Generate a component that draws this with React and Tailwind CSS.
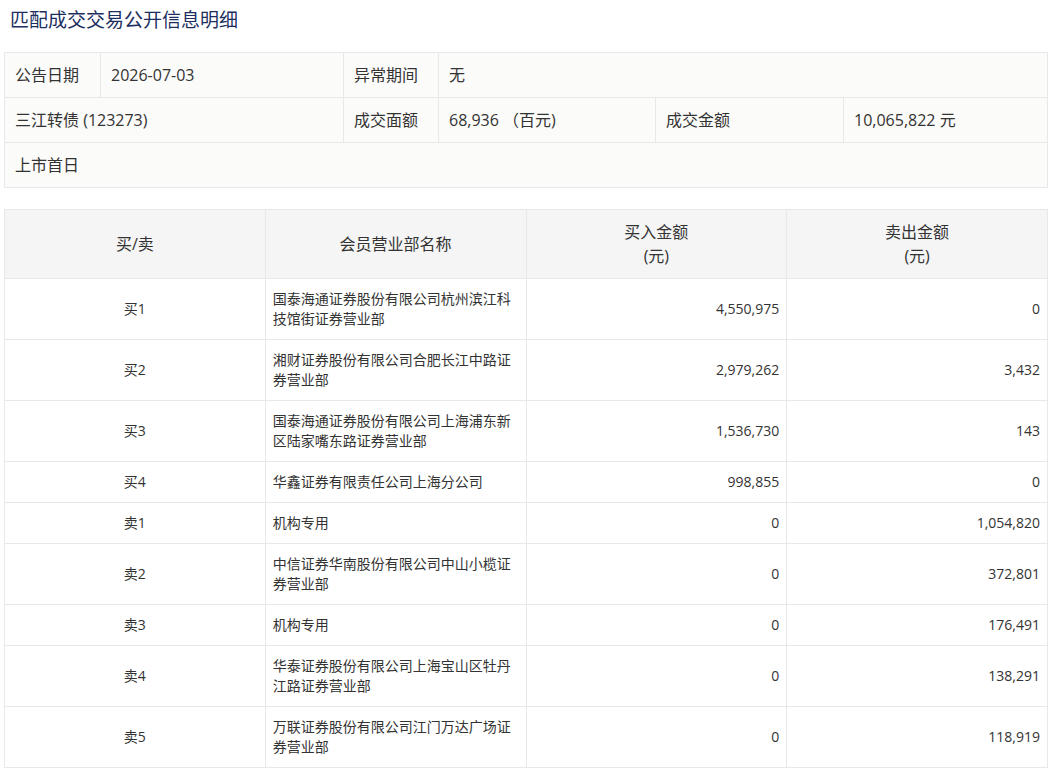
import React from "react";

const rows = [
  { side: "买1", name: "国泰海通证券股份有限公司杭州滨江科技馆街证券营业部", buy: "4,550,975", sell: "0" },
  { side: "买2", name: "湘财证券股份有限公司合肥长江中路证券营业部", buy: "2,979,262", sell: "3,432" },
  { side: "买3", name: "国泰海通证券股份有限公司上海浦东新区陆家嘴东路证券营业部", buy: "1,536,730", sell: "143" },
  { side: "买4", name: "华鑫证券有限责任公司上海分公司", buy: "998,855", sell: "0" },
  { side: "卖1", name: "机构专用", buy: "0", sell: "1,054,820" },
  { side: "卖2", name: "中信证券华南股份有限公司中山小榄证券营业部", buy: "0", sell: "372,801" },
  { side: "卖3", name: "机构专用", buy: "0", sell: "176,491" },
  { side: "卖4", name: "华泰证券股份有限公司上海宝山区牡丹江路证券营业部", buy: "0", sell: "138,291" },
  { side: "卖5", name: "万联证券股份有限公司江门万达广场证券营业部", buy: "0", sell: "118,919" },
];

const info = "border border-[#e8e8e8] px-[10px] h-[45px] align-middle";

export default function App() {
  return (
    <div className="bg-white text-[#333] font-['Open_Sans','Noto_Sans_CJK_SC',sans-serif] pl-[4px] pr-[5px]">
      <h2 className="pt-[8px] pl-[6px] text-[19px] leading-[24px] text-[#1c2f5e] font-normal">
        匹配成交交易公开信息明细
      </h2>

      <table className="mt-[20px] w-full table-fixed border-collapse bg-[#fbfbf9] text-[16px] leading-[22px]">
        <colgroup>
          <col className="w-[96px]" />
          <col className="w-[243px]" />
          <col className="w-[95px]" />
          <col className="w-[217px]" />
          <col className="w-[188px]" />
          <col />
        </colgroup>
        <tbody>
          <tr>
            <td className={info}>公告日期</td>
            <td className={info}>2026-07-03</td>
            <td className={info}>异常期间</td>
            <td className={info} colSpan={3}>无</td>
          </tr>
          <tr>
            <td className={info} colSpan={2}>三江转债 (123273)</td>
            <td className={info}>成交面额</td>
            <td className={info}>68,936 （百元)</td>
            <td className={info}>成交金额</td>
            <td className={info}>10,065,822 元</td>
          </tr>
          <tr>
            <td className={info} colSpan={6}>上市首日</td>
          </tr>
        </tbody>
      </table>

      <table className="mt-[21px] w-full table-fixed border-collapse text-[14px] leading-[20px]">
        <thead>
          <tr className="bg-[#f5f5f5] text-[16px] leading-[24px]">
            <th className="border border-[#e8e8e8] h-[69px] font-normal">买/卖</th>
            <th className="border border-[#e8e8e8] font-normal">会员营业部名称</th>
            <th className="border border-[#e8e8e8] font-normal">
              买入金额
              <br />
              (元)
            </th>
            <th className="border border-[#e8e8e8] font-normal">
              卖出金额
              <br />
              (元)
            </th>
          </tr>
        </thead>
        <tbody>
          {rows.map((r) => (
            <tr key={r.side}>
              <td className="border border-[#e8e8e8] py-[10px] text-center">{r.side}</td>
              <td className="border border-[#e8e8e8] py-[10px] px-[7px]">{r.name}</td>
              <td className="border border-[#e8e8e8] py-[10px] px-[7px] text-right">{r.buy}</td>
              <td className="border border-[#e8e8e8] py-[10px] px-[7px] text-right">{r.sell}</td>
            </tr>
          ))}
        </tbody>
      </table>
    </div>
  );
}
